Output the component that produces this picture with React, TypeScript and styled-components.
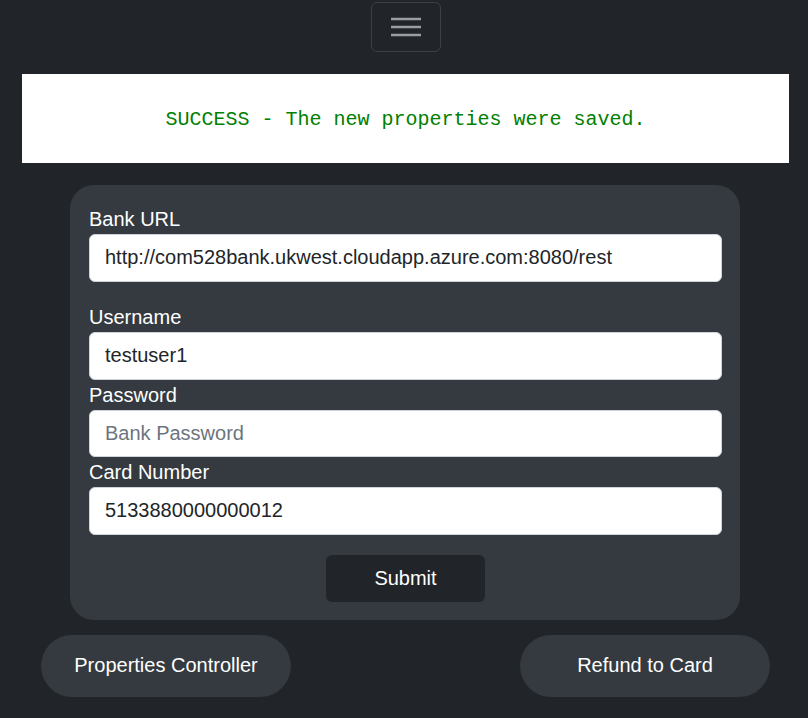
import React from "react";
import styled, { createGlobalStyle } from "styled-components";

const Global = createGlobalStyle`
  html, body { margin: 0; padding: 0; background: #212529; }
  body { font-family: "Liberation Sans", Arial, sans-serif; color: #fff; }
  * { box-sizing: border-box; }
`;

const Page = styled.div`
  display: flex;
  flex-direction: column;
  align-items: stretch;
  padding: 2px 19px 20px 22px;
`;

const NavRow = styled.div`
  display: flex;
  justify-content: center;
`;

const Toggler = styled.button`
  width: 70px;
  height: 50px;
  background: transparent;
  border: 1px solid rgba(255, 255, 255, 0.12);
  border-radius: 6px;
  display: flex;
  align-items: center;
  justify-content: center;
  padding: 0;
`;

const Banner = styled.div`
  margin-top: 22px;
  height: 89px;
  background: #fff;
  display: flex;
  align-items: center;
  justify-content: center;
  font-family: "Liberation Mono", "DejaVu Sans Mono", monospace;
  font-size: 20px;
  color: #008000;
  padding-top: 1px;
`;

const Card = styled.form`
  margin: 22px 49px 0 48px;
  background: #343a40;
  border-radius: 24px;
  padding: 19px 18px 18px 19px;
  display: flex;
  flex-direction: column;
`;

const Label = styled.label`
  font-size: 20px;
  line-height: 30px;
  height: 30px;
  color: #fff;
`;

const Input = styled.input<{ $gap?: boolean }>`
  height: 47.5px;
  width: 100%;
  border: 1px solid #ced4da;
  border-radius: 6px;
  background: #fff;
  padding: 0 15px;
  font-family: "Liberation Sans", Arial, sans-serif;
  font-size: 20px;
  color: #212529;
  margin-bottom: ${(p) => (p.$gap ? "20.5px" : "0")};
  outline: none;
  &::placeholder { color: #6c757d; }
`;

const SubmitRow = styled.div`
  display: flex;
  justify-content: center;
  margin-top: 20px;
`;

const SubmitButton = styled.button`
  width: 159px;
  height: 47px;
  background: #212529;
  border: none;
  border-radius: 6px;
  color: #fff;
  font-family: "Liberation Sans", Arial, sans-serif;
  font-size: 20px;
`;

const BottomRow = styled.div`
  display: flex;
  justify-content: space-between;
  margin: 15px 19px 0 19px;
`;

const PillButton = styled.button`
  width: 250px;
  height: 62px;
  background: #343a40;
  border: none;
  border-radius: 31px;
  color: #fff;
  font-family: "Liberation Sans", Arial, sans-serif;
  font-size: 20px;
`;

export default function App() {
  return (
    <>
      <Global />
      <Page>
        <NavRow>
          <Toggler type="button" aria-label="Toggle navigation">
            <svg width="30" height="30" viewBox="0 0 30 30">
              <path
                d="M0 7h30M0 15h30M0 23h30"
                stroke="rgba(255,255,255,0.55)"
                strokeWidth="2.4"
                strokeLinecap="round"
              />
            </svg>
          </Toggler>
        </NavRow>
        <Banner>SUCCESS - The new properties were saved.</Banner>
        <Card onSubmit={(e) => e.preventDefault()}>
          <Label>Bank URL</Label>
          <Input
            $gap
            defaultValue="http://com528bank.ukwest.cloudapp.azure.com:8080/rest"
          />
          <Label>Username</Label>
          <Input defaultValue="testuser1" />
          <Label>Password</Label>
          <Input type="password" placeholder="Bank Password" />
          <Label>Card Number</Label>
          <Input defaultValue="5133880000000012" />
          <SubmitRow>
            <SubmitButton type="submit">Submit</SubmitButton>
          </SubmitRow>
        </Card>
        <BottomRow>
          <PillButton type="button">Properties Controller</PillButton>
          <PillButton type="button">Refund to Card</PillButton>
        </BottomRow>
      </Page>
    </>
  );
}
